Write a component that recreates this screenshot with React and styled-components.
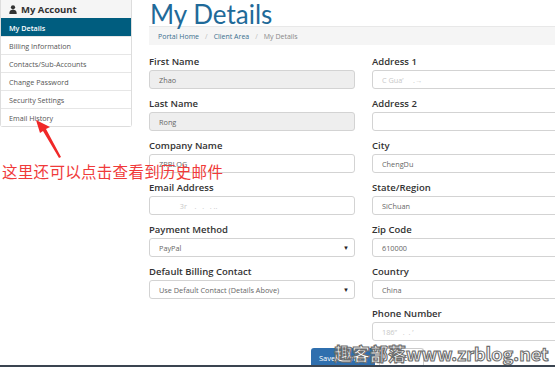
import React from 'react';
import styled, { createGlobalStyle } from 'styled-components';

const Global = createGlobalStyle`
  html, body { margin: 0; padding: 0; background: #fff; }
  body { width: 555px; height: 367px; overflow: hidden; font-family: "Open Sans", "Noto Sans", sans-serif; color: #333; }
`;

const Page = styled.div`
  position: relative;
  width: 555px;
  height: 367px;
  overflow: hidden;
  display: flex;
  align-items: flex-start;
  gap: 17px;
`;

const Sidebar = styled.div`
  width: 130px;
  flex-shrink: 0;
  border: 1px solid #ddd;
  border-top: none;
  border-radius: 0 0 3px 3px;
  background: #fff;
`;

const SideHead = styled.div`
  height: 18px;
  background: #f5f5f5;
  display: flex;
  align-items: center;
  gap: 4px;
  padding-left: 8px;
  font-size: 9.5px;
  font-weight: 700;
  color: #333;
`;

const SideItem = styled.div`
  box-sizing: border-box;
  height: 18px;
  display: flex;
  align-items: center;
  padding-left: 8px;
  font-size: 7.2px;
  color: ${p => (p.$active ? '#fff' : '#555')};
  font-weight: ${p => (p.$active ? 600 : 400)};
  background: ${p => (p.$active ? '#005d7f' : '#fff')};
  border-top: 1px solid ${p => (p.$active ? '#005d7f' : '#e6e6e6')};
`;

const Main = styled.div`
  width: 430px;
  flex-shrink: 0;
`;

const Title = styled.h1`
  margin: 0;
  height: 26px;
  line-height: 28px;
  font-family: "Lato", "Open Sans", sans-serif;
  font-weight: 400;
  font-size: 26px;
  color: #1f6a99;
  padding-left: 1px;
  overflow: visible;
`;

const Crumbs = styled.div`
  height: 18px;
  background: #f5f5f5;
  border-top: 1px solid #e8e8e8;
  display: flex;
  align-items: center;
  gap: 6px;
  padding-left: 9px;
  font-size: 7px;
  color: #777;
`;

const Crumb = styled.span`
  color: ${p => (p.$current ? '#888' : '#3a6f8f')};
`;

const Sep = styled.span`
  color: #bbb;
`;

const Columns = styled.div`
  display: grid;
  grid-template-columns: 206px 206px;
  column-gap: 17px;
  margin-top: 11px;
`;

const Col = styled.div`
  display: flex;
  flex-direction: column;
`;

const Field = styled.div`
  height: 42px;
`;

const Label = styled.div`
  font-size: 9.5px;
  font-weight: 600;
  color: #333;
  height: 14px;
  line-height: 12px;
`;

const Input = styled.div`
  box-sizing: border-box;
  height: 19px;
  border: 1px solid #d3d3d3;
  border-radius: 3px;
  background: ${p => (p.$disabled ? '#eee' : '#fff')};
  display: flex;
  align-items: center;
  justify-content: space-between;
  padding: 0 5px 0 9px;
  font-size: 7.3px;
  color: ${p => (p.$faint ? '#c8c8c8' : '#666')};
`;

const Caret = styled.span`
  font-size: 6px;
  color: #222;
`;

const Actions = styled.div`
  position: absolute;
  left: 311px;
  top: 348px;
  display: flex;
  gap: 4px;
`;

const SaveBtn = styled.div`
  background: #2f6fae;
  color: #fff;
  font-size: 7.5px;
  height: 19px;
  padding: 0 8px;
  display: flex;
  align-items: center;
  border-radius: 3px 3px 0 0;
`;

const CancelBtn = styled.div`
  border: 1px solid #ccc;
  border-bottom: none;
  background: #fff;
  color: #333;
  font-size: 7.5px;
  height: 18px;
  padding: 0 10px;
  display: flex;
  align-items: center;
  border-radius: 3px 3px 0 0;
`;

const BottomBar = styled.div`
  position: absolute;
  left: 0;
  right: 0;
  bottom: 0;
  height: 2px;
  background: #3a4450;
`;

const Note = styled.div`
  position: absolute;
  left: 2px;
  top: 160px;
  font-family: "Noto Sans CJK SC", sans-serif;
  font-size: 15.5px;
  color: #f03a3a;
  letter-spacing: 0.3px;
  white-space: nowrap;
`;

const Arrow = styled.svg`
  position: absolute;
  left: 30px;
  top: 116px;
`;

const Watermark = styled.div`
  position: absolute;
  left: 334px;
  top: 340px;
  font-family: "Noto Sans CJK SC", sans-serif;
  font-size: 18px;
  font-weight: 700;
  color: #fff;
  -webkit-text-stroke: 1.1px #6d6d6d;
  white-space: nowrap;
`;

const UserIcon = () => (
  <svg width="8" height="9" viewBox="0 0 8 9">
    <circle cx="4" cy="2.3" r="2.1" fill="#333" />
    <path d="M0.3 9 C0.3 5.6 1.8 4.8 4 4.8 C6.2 4.8 7.7 5.6 7.7 9 Z" fill="#333" />
  </svg>
);

const left = [
  { label: 'First Name', value: 'Zhao', disabled: true },
  { label: 'Last Name', value: 'Rong', disabled: true },
  { label: 'Company Name', value: 'ZRBLOG' },
  { label: 'Email Address', value: '\u00a0\u00a0\u00a0\u00a0\u00a0\u00a0\u00a0\u00a0\u00a0\u00a0 3r\u00a0\u00a0\u00a0 .\u00a0\u00a0 .\u00a0\u00a0 . ..', faint: true },
  { label: 'Payment Method', value: 'PayPal', select: true },
  { label: 'Default Billing Contact', value: 'Use Default Contact (Details Above)', select: true },
];

const right = [
  { label: 'Address 1', value: 'C  Gua\u2019\u00a0\u00a0\u00a0\u00a0 .\u2192', faint: true },
  { label: 'Address 2', value: '' },
  { label: 'City', value: 'ChengDu' },
  { label: 'State/Region', value: 'SiChuan' },
  { label: 'Zip Code', value: '610000' },
  { label: 'Country', value: 'China' },
  { label: 'Phone Number', value: '186\u2019\u2019\u00a0\u00a0 . \u00a0. \u2019', faint: true },
];

const renderField = f => (
  <Field key={f.label}>
    <Label>{f.label}</Label>
    <Input $disabled={f.disabled} $faint={f.faint}>
      <span>{f.value}</span>
      {f.select && <Caret>▼</Caret>}
    </Input>
  </Field>
);

export default function App() {
  return (
    <>
      <Global />
      <Page>
        <Sidebar>
          <SideHead>
            <UserIcon />
            My Account
          </SideHead>
          <SideItem $active>My Details</SideItem>
          <SideItem>Billing Information</SideItem>
          <SideItem>Contacts/Sub-Accounts</SideItem>
          <SideItem>Change Password</SideItem>
          <SideItem>Security Settings</SideItem>
          <SideItem>Email History</SideItem>
        </Sidebar>
        <Main>
          <Title>My Details</Title>
          <Crumbs>
            <Crumb>Portal Home</Crumb>
            <Sep>/</Sep>
            <Crumb>Client Area</Crumb>
            <Sep>/</Sep>
            <Crumb $current>My Details</Crumb>
          </Crumbs>
          <Columns>
            <Col>{left.map(renderField)}</Col>
            <Col>{right.map(renderField)}</Col>
          </Columns>
        </Main>
        <Actions>
          <SaveBtn>Save Changes</SaveBtn>
          <CancelBtn>Cancel</CancelBtn>
        </Actions>
        <Note>这里还可以点击查看到历史邮件</Note>
        <Arrow width="40" height="44" viewBox="0 0 40 44">
          <path d="M6 4 L20 11 L16 13 L31 41 L29 42 L13 15 L10 17 Z" fill="#f02828" />
        </Arrow>
        <Watermark>趣客部落www.zrblog.net</Watermark>
        <BottomBar />
      </Page>
    </>
  );
}
